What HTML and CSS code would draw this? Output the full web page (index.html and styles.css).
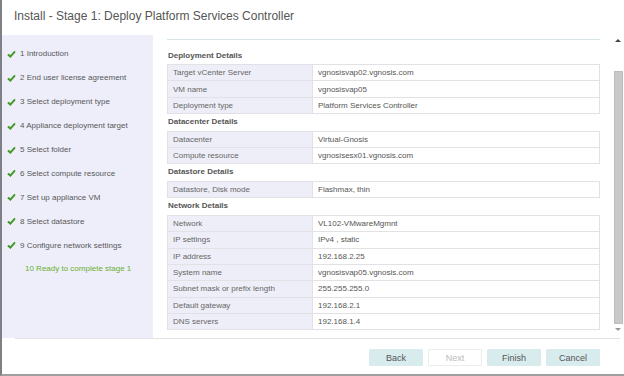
FILE: index.html
```html
<!DOCTYPE html>
<html lang="en">
<head>
  <meta charset="UTF-8" />
  <meta name="viewport" content="width=device-width, initial-scale=1.0" />
  <title>Install - Stage 1</title>
  <link rel="stylesheet" href="styles.css">
</head>
<body>
  <div class="window">
    <div class="titlebar">Install - Stage 1: Deploy Platform Services Controller</div>

    <div class="main">
      <ul class="steps">
        <li><svg class="check" viewBox="0 0 9 8"><path d="M1 4.4 L3.4 6.6 L8 1.4" /></svg>1 Introduction</li>
        <li><svg class="check" viewBox="0 0 9 8"><path d="M1 4.4 L3.4 6.6 L8 1.4" /></svg>2 End user license agreement</li>
        <li><svg class="check" viewBox="0 0 9 8"><path d="M1 4.4 L3.4 6.6 L8 1.4" /></svg>3 Select deployment type</li>
        <li><svg class="check" viewBox="0 0 9 8"><path d="M1 4.4 L3.4 6.6 L8 1.4" /></svg>4 Appliance deployment target</li>
        <li><svg class="check" viewBox="0 0 9 8"><path d="M1 4.4 L3.4 6.6 L8 1.4" /></svg>5 Select folder</li>
        <li><svg class="check" viewBox="0 0 9 8"><path d="M1 4.4 L3.4 6.6 L8 1.4" /></svg>6 Select compute resource</li>
        <li><svg class="check" viewBox="0 0 9 8"><path d="M1 4.4 L3.4 6.6 L8 1.4" /></svg>7 Set up appliance VM</li>
        <li><svg class="check" viewBox="0 0 9 8"><path d="M1 4.4 L3.4 6.6 L8 1.4" /></svg>8 Select datastore</li>
        <li><svg class="check" viewBox="0 0 9 8"><path d="M1 4.4 L3.4 6.6 L8 1.4" /></svg>9 Configure network settings</li>
        <li class="current">10 Ready to complete stage 1</li>
      </ul>

      <div class="content">
        <div class="summary">
          <h3>Deployment Details</h3>
          <div class="details">
            <div class="row"><span class="key">Target vCenter Server</span><span class="val">vgnosisvap02.vgnosis.com</span></div>
            <div class="row"><span class="key">VM name</span><span class="val">vgnosisvap05</span></div>
            <div class="row"><span class="key">Deployment type</span><span class="val">Platform Services Controller</span></div>
          </div>

          <h3>Datacenter Details</h3>
          <div class="details">
            <div class="row"><span class="key">Datacenter</span><span class="val">Virtual-Gnosis</span></div>
            <div class="row"><span class="key">Compute resource</span><span class="val">vgnosisesx01.vgnosis.com</span></div>
          </div>

          <h3>Datastore Details</h3>
          <div class="details">
            <div class="row"><span class="key">Datastore, Disk mode</span><span class="val">Flashmax, thin</span></div>
          </div>

          <h3>Network Details</h3>
          <div class="details">
            <div class="row"><span class="key">Network</span><span class="val">VL102-VMwareMgmnt</span></div>
            <div class="row"><span class="key">IP settings</span><span class="val">IPv4 , static</span></div>
            <div class="row"><span class="key">IP address</span><span class="val">192.168.2.25</span></div>
            <div class="row"><span class="key">System name</span><span class="val">vgnosisvap05.vgnosis.com</span></div>
            <div class="row"><span class="key">Subnet mask or prefix length</span><span class="val">255.255.255.0</span></div>
            <div class="row"><span class="key">Default gateway</span><span class="val">192.168.2.1</span></div>
            <div class="row"><span class="key">DNS servers</span><span class="val">192.168.1.4</span></div>
          </div>
        </div>

        <div class="scrollbar">
          <span class="arrow up"></span>
          <div class="thumb"></div>
          <span class="arrow down"></span>
        </div>
      </div>
    </div>

    <div class="footer">
      <button class="btn">Back</button>
      <button class="btn disabled">Next</button>
      <button class="btn">Finish</button>
      <button class="btn">Cancel</button>
    </div>
  </div>
</body>
</html>
```

FILE: styles.css
```css
body {
  margin: 0;
  padding: 0;
  background: #fff;
  font-family: "Liberation Sans", Arial, sans-serif;
}

.window {
  width: 624px;
  height: 376px;
  box-sizing: border-box;
  border-left: 2px solid #7d8084;
  border-bottom: 2px solid #a0a0a0;
  background: #fff;
  display: flex;
  flex-direction: column;
}

.titlebar {
  height: 35px;
  line-height: 33px;
  padding-left: 12px;
  font-size: 12px;
  color: #555;
  flex: none;
}

.main {
  display: flex;
  height: 303px;
  flex: none;
  overflow: hidden;
}

.steps {
  list-style: none;
  margin: 0;
  padding: 7px 0 0 0;
  width: 151px;
  background: #eeeefb;
  flex: none;
}

.steps li {
  height: 23.9px;
  font-size: 8px;
  color: #585858;
  padding-left: 5px;
  white-space: nowrap;
  display: flex;
  align-items: center;
}

.check {
  width: 9px;
  height: 8px;
  margin-right: 4px;
  fill: none;
  stroke: #3f9a24;
  stroke-width: 2;
}

.steps li.current {
  color: #6aae2c;
  padding-left: 23px;
}

.content {
  flex: 1;
  display: flex;
  padding-left: 14px;
}

.summary {
  width: 433px;
  flex: none;
  border-top: 1px solid #d5e5e7;
  margin-top: 4px;
}

h3 {
  margin: 0;
  height: 16.6px;
  line-height: 16.6px;
  padding-left: 1px;
  font-size: 8px;
  font-weight: bold;
  color: #555;
}

h3:first-child {
  height: 17px;
  line-height: 17px;
  padding-top: 7px;
}

.details {
  border: 1px solid #e2e2e6;
  border-bottom: none;
  font-size: 8px;
  color: #555;
}

.row {
  display: flex;
  height: 16.35px;
  box-sizing: border-box;
  border-bottom: 1px solid #e2e2e6;
  white-space: nowrap;
}

.key {
  width: 145px;
  flex: none;
  box-sizing: border-box;
  padding-left: 5px;
  display: flex;
  align-items: center;
  background: #eeeef8;
  border-right: 1px solid #e2e2e6;
  color: #666;
}

.val {
  padding-left: 5px;
  display: flex;
  align-items: center;
}

.scrollbar {
  margin-left: 13px;
  width: 10px;
  display: flex;
  flex-direction: column;
  align-items: center;
  padding-top: 4px;
}

.arrow {
  width: 0;
  height: 0;
  border-left: 3px solid transparent;
  border-right: 3px solid transparent;
}

.arrow.up {
  border-bottom: 3px solid #444;
}

.arrow.down {
  border-top: 3px solid #999;
  margin-top: 4px;
}

.thumb {
  margin-top: 29px;
  width: 9px;
  height: 253px;
  box-sizing: border-box;
  background: #c9c9c9;
  border: 1px solid #bdbdbd;
}

.footer {
  flex: 1;
  margin-left: 13px;
  margin-right: 4px;
  border-top: 1px solid #e3e3e3;
  display: flex;
  justify-content: flex-end;
  align-items: flex-start;
  gap: 5px;
  padding-top: 10px;
  padding-right: 20px;
}

.btn {
  width: 54px;
  height: 17px;
  padding: 0;
  border: 1px solid #d8ebed;
  background: #d8ebed;
  color: #555;
  font-family: "Liberation Sans", Arial, sans-serif;
  font-size: 9px;
  border-radius: 1px;
}

.btn.disabled {
  background: #fff;
  border-color: #e8eeee;
  color: #bbb;
}
```
